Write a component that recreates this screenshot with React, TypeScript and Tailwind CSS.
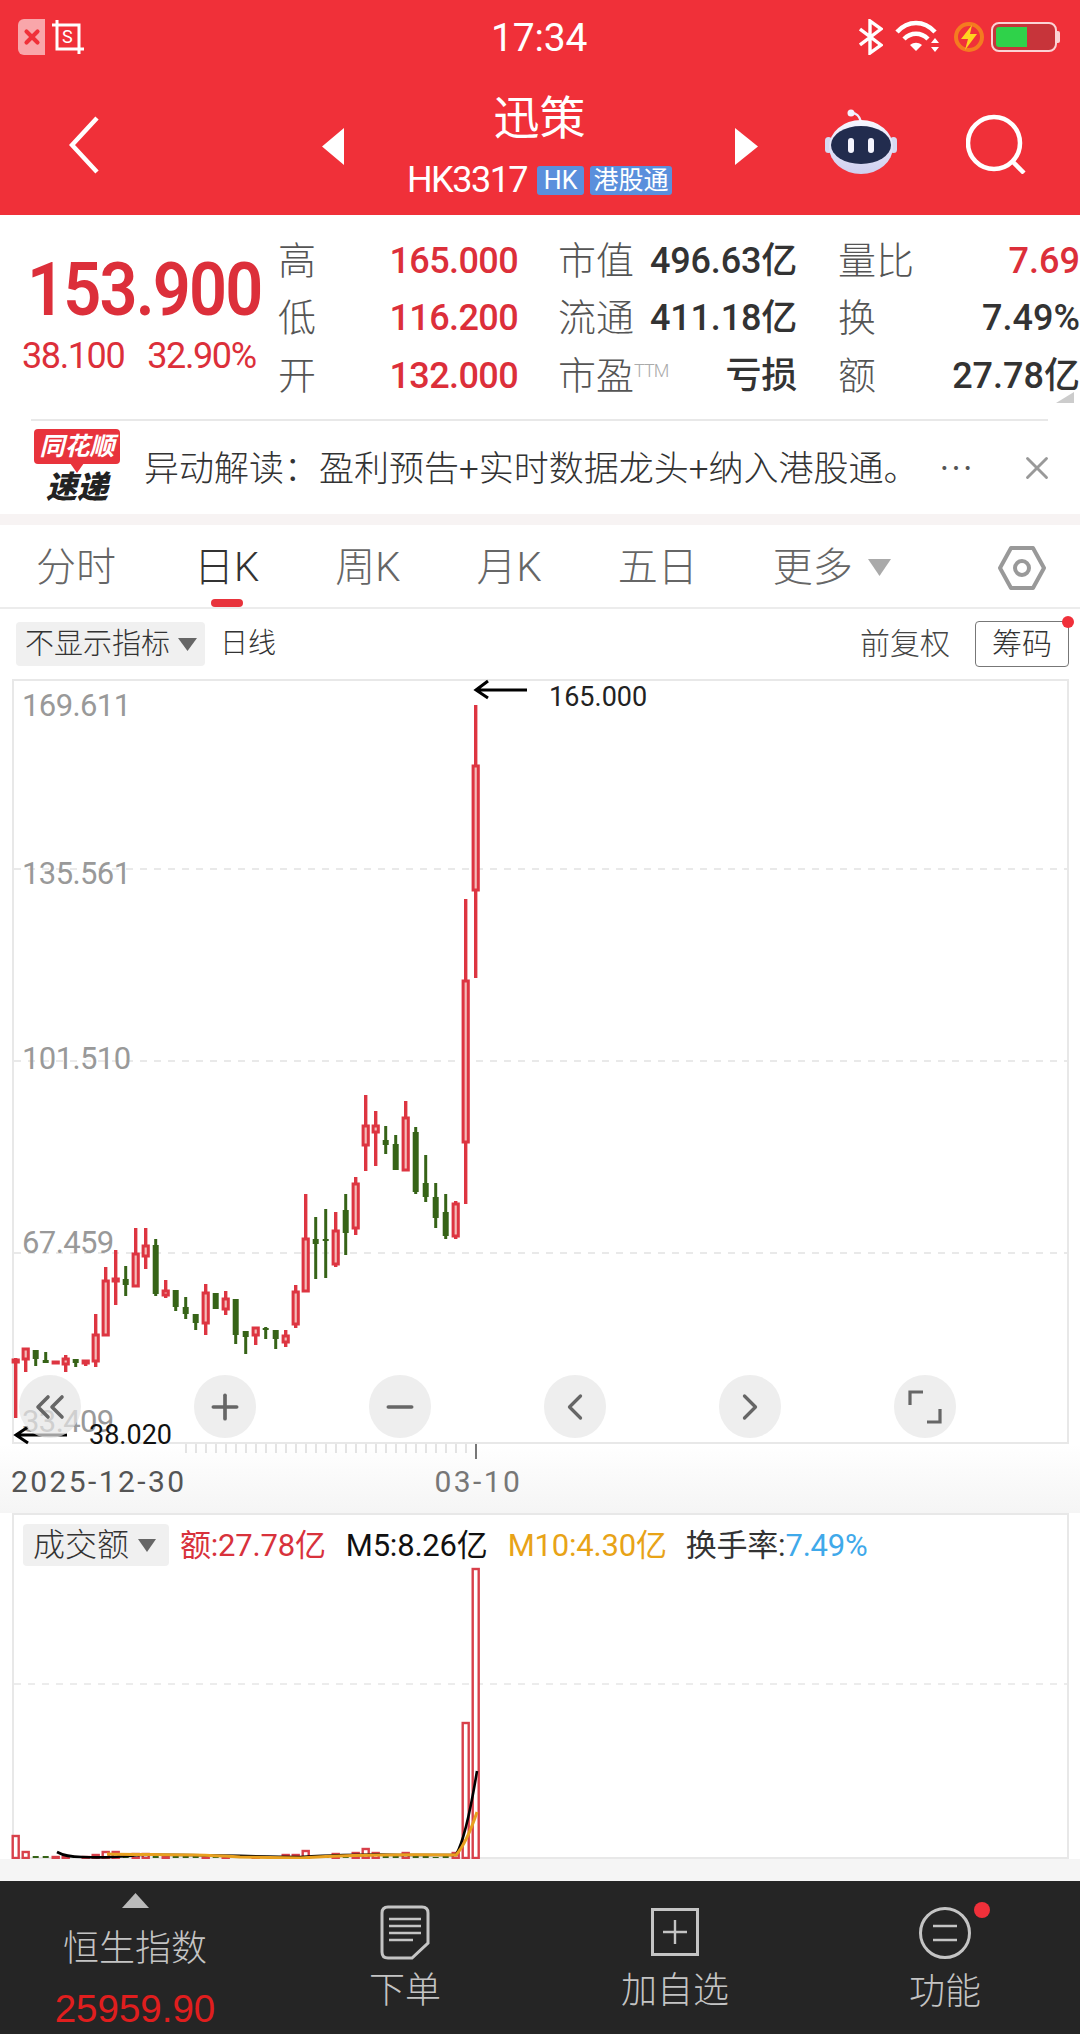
import { ChevronLeft, ChevronRight, ChevronsLeft, Minus, Plus, X } from 'lucide-react';

const RED = '#dd3541';
const GREEN = '#366317';

// up, wick top, body top, body bottom, wick bottom (page y coordinates)
const candles: [boolean, number, number, number, number][] = [
  [true, 1358, 1359, 1363, 1418],
  [true, 1348, 1348, 1360, 1372],
  [false, 1350, 1350, 1359, 1366],
  [false, 1352, 1360, 1363, 1363],
  [true, 1361, 1361, 1364, 1364],
  [true, 1355, 1358, 1365, 1372],
  [false, 1359, 1359, 1363, 1367],
  [true, 1360, 1360, 1364, 1366],
  [true, 1314, 1334, 1362, 1367],
  [true, 1267, 1280, 1336, 1336],
  [true, 1250, 1278, 1282, 1305],
  [false, 1266, 1279, 1285, 1296],
  [true, 1228, 1253, 1287, 1287],
  [true, 1228, 1245, 1257, 1269],
  [false, 1239, 1245, 1294, 1296],
  [true, 1280, 1290, 1296, 1298],
  [false, 1290, 1290, 1307, 1311],
  [false, 1297, 1307, 1314, 1319],
  [false, 1314, 1314, 1323, 1330],
  [true, 1284, 1292, 1324, 1335],
  [false, 1293, 1293, 1309, 1309],
  [true, 1291, 1298, 1310, 1315],
  [false, 1299, 1299, 1335, 1344],
  [false, 1331, 1331, 1337, 1354],
  [true, 1327, 1327, 1336, 1345],
  [false, 1327, 1328, 1330, 1339],
  [false, 1330, 1330, 1339, 1349],
  [true, 1330, 1335, 1343, 1347],
  [true, 1285, 1291, 1325, 1328],
  [true, 1194, 1238, 1292, 1292],
  [false, 1217, 1239, 1244, 1279],
  [false, 1209, 1239, 1241, 1278],
  [true, 1212, 1230, 1265, 1267],
  [false, 1194, 1210, 1233, 1255],
  [true, 1177, 1183, 1229, 1235],
  [true, 1095, 1125, 1146, 1171],
  [true, 1111, 1125, 1133, 1166],
  [false, 1126, 1140, 1145, 1154],
  [false, 1135, 1144, 1170, 1170],
  [true, 1101, 1117, 1171, 1171],
  [false, 1127, 1132, 1192, 1194],
  [false, 1155, 1183, 1197, 1202],
  [false, 1183, 1197, 1218, 1228],
  [false, 1194, 1212, 1236, 1239],
  [true, 1201, 1203, 1237, 1239],
  [true, 899, 980, 1143, 1204],
  [true, 705, 765, 891, 978],
];

const volumes = [22, 6, 2, 2, 1, 1, 2, 1, 3, 6, 6, 2, 4, 4, 3, 1, 2, 2, 2, 1, 1, 1, 2, 1, 1, 1, 1, 3, 3, 7, 2, 2, 4, 2, 5, 9, 5, 2, 2, 5, 3, 2, 1, 2, 5, 135, 289];

const cx = (i: number) => 15.7 + i * 10;

function KChart() {
  return (
    <svg viewBox="14 681 1053 761" className="block h-[761px] w-[1053px] overflow-visible">
      {[869, 1061, 1253].map((y) => (
        <line key={y} x1={14} x2={1067} y1={y} y2={y} stroke="#e2e2e2" strokeWidth={1.5} strokeDasharray="7 7" />
      ))}
      {[
        ['169.611', 716],
        ['135.561', 884],
        ['101.510', 1069],
        ['67.459', 1253],
        ['33.409', 1432],
      ].map(([t, y]) => (
        <text key={t} x={22} y={y} fill="#999999" fontSize={31} letterSpacing={-0.6} fontFamily="Roboto, sans-serif">
          {t}
        </text>
      ))}
      {candles.map(([up, high, top, bottom, low], i) => {
        const x = cx(i);
        const color = up ? RED : GREEN;
        const h = bottom - top;
        return (
          <g key={i}>
            <line x1={x} x2={x} y1={high} y2={low} stroke={color} strokeWidth={up ? 3.4 : 3} />
            {up ? (
              <rect x={x - 2.6} y={top + 1} width={5.2} height={Math.max(h - 2, 1)} fill={h > 5 ? '#f3bdb8' : RED} stroke={RED} strokeWidth={3} />
            ) : (
              <rect x={x - 3} y={top} width={6} height={h} fill={GREEN} />
            )}
          </g>
        );
      })}
      <g stroke="#000" strokeWidth={3} fill="none">
        <path d="M527 690H477M488 681L476 690L488 698" />
        <path d="M67 1435H17M28 1427L16 1435L28 1443" />
      </g>
      <text x={549} y={706} fontSize={27} fill="#222" fontFamily="Roboto, sans-serif">165.000</text>
      <text x={89} y={1444} fontSize={27} fill="#111" fontFamily="Roboto, sans-serif">38.020</text>
    </svg>
  );
}

function VolumeChart() {
  return (
    <svg viewBox="14 1570 1053 288" className="block h-[288px] w-[1053px] overflow-visible">
      <line x1={14} x2={1067} y1={1685} y2={1685} stroke="#e6e6e6" strokeWidth={1.5} strokeDasharray="7 7" />
      {volumes.map((v, i) => {
        const up = candles[i][0];
        const x = cx(i);
        return up ? (
          <rect key={i} x={x - 3} y={1859 - v} width={6} height={v} fill={v > 3 ? '#fff' : RED} stroke="#d8404a" strokeWidth={2.4} />
        ) : (
          <rect key={i} x={x - 3} y={1859 - v} width={6} height={v} fill={GREEN} />
        );
      })}
      <path d="M57 1853C64 1857 70 1858 82 1858C100 1859 120 1858 140 1856C170 1855 220 1857 300 1858C340 1856 370 1855 400 1856L456 1856C464 1842 470 1815 477 1772" fill="none" stroke="#000" strokeWidth={2.6} />
      <path d="M107 1855C150 1856 200 1855 240 1858L300 1859C330 1857 380 1855 456 1856C463 1848 470 1834 477 1813" fill="none" stroke="#e8a01f" strokeWidth={3} />
    </svg>
  );
}

function Robot() {
  return (
    <svg width="72" height="66" viewBox="0 0 72 66">
      <defs>
        <linearGradient id="robotHead" x1="0" y1="0" x2="0" y2="1">
          <stop offset="0" stopColor="#f7f7ff" />
          <stop offset="1" stopColor="#cfcfef" />
        </linearGradient>
      </defs>
      <path d="M36 14C34 6 30 5 26 5" fill="none" stroke="#eef" strokeWidth="2.5" />
      <circle cx="26" cy="5" r="3.5" fill="#f3f3ff" />
      <rect x="0" y="29" width="7" height="16" rx="3.5" fill="#d7d9f2" />
      <rect x="65" y="29" width="7" height="16" rx="3.5" fill="#d7d9f2" />
      <ellipse cx="36" cy="39" rx="32" ry="27" fill="url(#robotHead)" />
      <ellipse cx="36" cy="37" rx="30" ry="19" fill="#222c4e" />
      <rect x="23" y="30" width="6" height="15" rx="3" fill="#f5f5ff" />
      <rect x="43" y="30" width="6" height="15" rx="3" fill="#f5f5ff" />
    </svg>
  );
}

function Triangle({ dir, className }: { dir: 'l' | 'r' | 'd' | 'u' | 'c'; className: string }) {
  const pts = { l: '100,0 100,100 0,50', r: '0,0 0,100 100,50', d: '0,0 100,0 50,100', u: '0,100 100,100 50,0', c: '100,0 100,100 0,100' }[dir];
  return (
    <svg viewBox="0 0 100 100" preserveAspectRatio="none" className={className}>
      <polygon points={pts} fill="currentColor" />
    </svg>
  );
}

function QuoteRow({ label, value, label2, value2, label3, value3, ttm, red3 }: { label: string; value: string; label2: string; value2: string; label3: string; value3: string; ttm?: boolean; red3?: boolean }) {
  return (
    <div className="flex h-[57.5px] items-center">
      <span className="w-[38px] shrink-0 text-[38px] leading-none font-light text-[#555]">{label}</span>
      <span className="w-[202px] shrink-0 text-right text-[36px] leading-none font-medium tracking-[-0.6px] text-[#dc2f3a]">{value}</span>
      <span className="ml-[40px] flex w-[85px] shrink-0 items-start text-[38px] leading-none font-light whitespace-nowrap text-[#555]">
        {label2}
        {ttm && <span className="mt-[5px] text-[18px] font-light tracking-[-1px] text-[#aaa]">TTM</span>}
      </span>
      <span className="w-[154px] shrink-0 text-right text-[36px] leading-none font-medium tracking-[-0.2px] whitespace-nowrap text-[#333]">{value2}</span>
      <span className="ml-[41px] w-[76px] shrink-0 text-[38px] leading-none font-light text-[#555]">{label3}</span>
      <span className={`w-[166px] shrink-0 text-right text-[36px] leading-none font-medium whitespace-nowrap ${red3 ? 'text-[#dc2f3a]' : 'text-[#333]'}`}>{value3}</span>
    </div>
  );
}

export default function App() {
  return (
    <div className="flex h-[2034px] w-[1080px] flex-col overflow-hidden bg-white font-['Roboto','Noto_Sans_CJK_SC',sans-serif]">
      {/* red header */}
      <header className="h-[215px] shrink-0 bg-[#f03039] text-white">
        <div className="relative flex h-[74px] items-center pr-[20px] pl-[18px]">
          <div className="flex h-[36px] w-[27px] items-center justify-center rounded-l-[6px] bg-[#f9a6aa]">
            <X size={22} strokeWidth={4.5} color="#f03039" />
          </div>
          <svg width="32" height="34" viewBox="0 0 32 34" className="ml-[7px]" fill="none" stroke="#fff" strokeWidth="3">
            <path d="M5 0V29H32M0 5H27V34" />
            <rect x="9" y="8" width="14" height="17" fill="#f03039" stroke="none" />
            <text x="10" y="23" fontSize="18" fill="#fff" stroke="none" fontFamily="Roboto, sans-serif">S</text>
          </svg>
          <span className="absolute top-[15px] left-[491px] text-[39px] leading-[46px] font-normal tracking-[-0.2px]">17:34</span>
          <div className="ml-auto flex items-center">
            <svg width="24" height="36" viewBox="0 0 24 36" fill="none" stroke="#fff" strokeWidth="3.4">
              <path d="M1 10L22 26L11 34V2L22 10L1 26" />
            </svg>
            <svg width="46" height="34" viewBox="0 0 46 34" className="ml-[12px]" fill="none" stroke="#fff" strokeWidth="4.5">
              <path d="M2 12C13 0 29 0 40 12" />
              <path d="M9 19C16 12 26 12 33 19" />
              <path d="M15 25L21 31L27 25C23 22 19 22 15 25Z" fill="#fff" stroke="none" />
              <path d="M36 23L40 18L44 23ZM36 27L40 32L44 27Z" fill="#fff" stroke="none" />
            </svg>
            <svg width="32" height="30" viewBox="0 0 32 30" className="ml-[12px]">
              <circle cx="16" cy="15" r="13" fill="none" stroke="#f47b20" strokeWidth="4" />
              <path d="M19 3L8 17H15L12 28L24 12H17Z" fill="#ffd21f" />
            </svg>
            <div className="ml-[6px] flex h-[30px] w-[66px] items-center rounded-[8px] border-2 border-[#fbd3d5] bg-[#c7343a] pl-[3px]">
              <div className="h-[20px] w-[31px] rounded-l-[3px] bg-[#2fd24a]" />
            </div>
            <div className="h-[12px] w-[3px] rounded-r-[2px] bg-[#fbd3d5]" />
          </div>
        </div>
        <div className="flex h-[141px] items-start">
          <div className="mt-[42px] ml-[69px] w-[253px]">
            <svg width="30" height="58" viewBox="0 0 30 58" fill="none" stroke="#fff" strokeWidth="4.5">
              <path d="M28 2L3 29L28 56" />
            </svg>
          </div>
          <Triangle dir="l" className="mt-[54px] h-[37px] w-[22px] text-white" />
          <div className="flex w-[391px] flex-col items-center">
            <span className="mt-[17px] text-[46px] leading-[54px] font-normal">迅策</span>
            <div className="mt-[20px] flex h-[30px] items-center">
              <span className="text-[36px] leading-none tracking-[-1.5px]">HK3317</span>
              <span className="ml-[10px] flex h-[29px] w-[47px] items-center justify-center rounded-[3px] bg-[#5a8fdc] text-[25px] leading-none">HK</span>
              <span className="ml-[6px] flex h-[29px] w-[82px] items-center justify-center rounded-[3px] bg-[#5a8fdc] text-[25px] leading-none">港股通</span>
            </div>
          </div>
          <Triangle dir="r" className="mt-[54px] h-[37px] w-[23px] text-white" />
          <div className="mt-[34px] ml-[67px]">
            <Robot />
          </div>
          <svg width="60" height="60" viewBox="0 0 60 60" className="mt-[40px] ml-[69px]" fill="none" stroke="#fff" strokeWidth="4.5">
            <circle cx="28" cy="29" r="26" />
            <path d="M46 47L58 59" />
          </svg>
        </div>
      </header>

      {/* quote block */}
      <section className="relative flex h-[204px] shrink-0 overflow-hidden pt-[17px]">
        <div className="w-[278px] shrink-0 pl-[22px]">
          <div className="mt-[28px] ml-[5px] origin-left scale-x-[0.9] text-[74px] leading-[60px] font-semibold tracking-[-2px] whitespace-nowrap text-[#dc2f3a]">153.900</div>
          <div className="mt-[16px] flex text-[36px] leading-[40px] font-normal tracking-[-1.4px] text-[#dc2f3a]">
            <span>38.100</span>
            <span className="ml-[23px]">32.90%</span>
          </div>
        </div>
        <div className="flex-1">
          <QuoteRow label="高" value="165.000" label2="市值" value2="496.63亿" label3="量比" value3="7.69" red3 />
          <QuoteRow label="低" value="116.200" label2="流通" value2="411.18亿" label3="换" value3="7.49%" />
          <QuoteRow label="开" value="132.000" label2="市盈" value2="亏损" label3="额" value3="27.78亿" ttm />
        </div>
        <Triangle dir="c" className="absolute right-[6px] bottom-[16px] h-[11px] w-[18px] text-[#cccccc]" />
      </section>

      {/* news strip */}
      <div className="mx-[31px] h-[1.5px] w-[1017px] shrink-0 bg-[#e8e8e8]" />
      <section className="flex h-[93px] shrink-0 items-center">
        <div className="ml-[34px] flex w-[86px] flex-col items-center">
          <div className="relative flex h-[35px] w-[86px] items-center justify-center rounded-[4px] bg-[#e8333c] text-[25px] leading-none font-bold text-white italic">
            同花顺
            <Triangle dir="d" className="absolute -bottom-[9px] left-[36px] h-[10px] w-[14px] text-[#e8333c]" />
          </div>
          <span className="mt-[7px] text-[31px] leading-[34px] font-black text-[#222] italic">速递</span>
        </div>
        <p className="mt-[4px] ml-[24px] w-[874px] shrink-0 text-[35px] leading-none font-light whitespace-nowrap text-[#333]">
          异动解读：盈利预告+实时数据龙头+纳入港股通。
          <span className="ml-[20px] text-[#555]">⋯</span>
        </p>
        <X size={38} strokeWidth={1.8} color="#999" className="mt-[2px]" />
      </section>
      <div className="h-[11px] shrink-0 bg-[#f7f3f3]" />

      {/* period tabs */}
      <nav className="relative flex h-[84px] shrink-0 items-center border-b-2 border-[#ececec] pt-[4px] text-[40px] leading-none font-light text-[#666]">
        <span className="ml-[36px]">分时</span>
        <span className="ml-[78px] text-[#333]">日K</span>
        <span className="ml-[76px]">周K</span>
        <span className="ml-[76px]">月K</span>
        <span className="ml-[76px]">五日</span>
        <span className="ml-[75px]">更多</span>
        <Triangle dir="d" className="ml-[15px] h-[17px] w-[23px] text-[#aaaaaa]" />
        <svg width="48" height="46" viewBox="0 0 48 46" className="ml-[107px]" fill="none" stroke="#999" strokeWidth="4" strokeLinejoin="round">
          <path d="M13 3H35L46 23L35 43H13L2 23Z" />
          <circle cx="24" cy="23" r="7" />
        </svg>
        <span className="absolute bottom-0 left-[211px] h-[8px] w-[32px] rounded-full bg-[#e8333c]" />
      </nav>

      {/* chart toolbar */}
      <div className="flex h-[71.5px] shrink-0 items-center pl-[16px]">
        <div className="flex h-[44px] w-[189px] items-center rounded-[4px] bg-[#f0f0f0] pl-[9px] text-[29px] leading-none font-light text-[#333]">
          不显示指标
          <Triangle dir="d" className="ml-[8px] h-[13px] w-[19px] text-[#666666]" />
        </div>
        <span className="ml-[15px] text-[28px] leading-none font-light text-[#333]">日线</span>
        <span className="ml-auto text-[30px] leading-none font-light text-[#444]">前复权</span>
        <div className="relative mr-[11px] ml-[25px] flex h-[46px] w-[94px] items-center justify-center rounded-[4px] border border-[#777] text-[30px] leading-none font-light text-[#333]">
          筹码
          <span className="absolute -top-[6px] -right-[6px] h-[12px] w-[12px] rounded-full bg-[#f0303a]" />
        </div>
      </div>

      {/* k-line chart */}
      <div className="relative mx-[12px] mt-[-1px] h-[765px] w-[1057px] shrink-0 border-2 border-[#e8e8e8]">
        <KChart />
        <div className="absolute top-[694px] left-[5px] flex gap-[113px]">
          <button className="flex h-[63px] w-[62px] items-center justify-center rounded-full bg-[#e6e6e6]/70 text-[#666]"><ChevronsLeft size={48} strokeWidth={1.8} /></button>
          <button className="flex h-[63px] w-[62px] items-center justify-center rounded-full bg-[#eeeeee] text-[#666]"><Plus size={40} strokeWidth={2.2} /></button>
          <button className="flex h-[63px] w-[62px] items-center justify-center rounded-full bg-[#eeeeee] text-[#666]"><Minus size={40} strokeWidth={2.2} /></button>
          <button className="flex h-[63px] w-[62px] items-center justify-center rounded-full bg-[#eeeeee] text-[#666]"><ChevronLeft size={44} strokeWidth={1.8} /></button>
          <button className="flex h-[63px] w-[62px] items-center justify-center rounded-full bg-[#eeeeee] text-[#666]"><ChevronRight size={44} strokeWidth={1.8} /></button>
          <button className="flex h-[63px] w-[62px] items-center justify-center rounded-full bg-[#eeeeee] text-[#666]">
            <svg width="34" height="34" viewBox="0 0 34 34" fill="none" stroke="#666" strokeWidth="3.2">
              <path d="M15 2H2V15M19 32H32V19" />
            </svg>
          </button>
        </div>
      </div>

      {/* date axis */}
      <div className="flex h-[69px] shrink-0 flex-col bg-gradient-to-b from-white to-[#f5f5f5]">
        <svg viewBox="0 0 1080 16" className="block h-[16px] w-[1080px] shrink-0">
          {Array.from({ length: 30 }, (_, i) => (
            <line key={i} x1={186 + i * 10} x2={186 + i * 10} y1={0} y2={9} stroke="#c9c9c9" strokeWidth={1} />
          ))}
          <line x1={476} x2={476} y1={0} y2={15} stroke="#777" strokeWidth={2} />
        </svg>
        <div className="mt-[7px] flex pl-[11px] text-[30px] leading-[30px] font-normal tracking-[2.4px] text-[#555]">
          <span>2025-12-30</span>
          <span className="ml-[248px] text-[#777]">03-10</span>
        </div>
      </div>

      {/* volume panel */}
      <div className="mx-[12px] h-[346px] w-[1057px] shrink-0 border-2 border-[#e8e8e8] bg-white">
        <div className="flex h-[54px] items-start pt-[9px] pl-[9px] text-[31px] leading-none font-light">
          <div className="flex h-[42px] w-[146px] items-center rounded-[4px] bg-[#f0f0f0] pl-[10px] text-[32px] text-[#333]">
            成交额
            <Triangle dir="d" className="ml-[9px] h-[13px] w-[18px] text-[#666666]" />
          </div>
          <div className="flex h-[42px] items-center font-normal tracking-[-0.2px] whitespace-nowrap">
            <span className="ml-[11px] text-[#d8323c]">额:27.78亿</span>
            <span className="ml-[20px] text-[#111]">M5:8.26亿</span>
            <span className="ml-[20px] text-[#e8a317]">M10:4.30亿</span>
            <span className="ml-[19px] text-[#333]">换手率:</span>
            <span className="text-[#3fa9ea]">7.49%</span>
          </div>
        </div>
        <VolumeChart />
      </div>
      <div className="h-[22px] shrink-0 bg-[#f5f5f5]" />

      {/* bottom bar */}
      <footer className="flex flex-1 bg-[#252525] text-[#c4c4c4]">
        <div className="flex w-[270px] flex-col items-center">
          <Triangle dir="u" className="mt-[12px] h-[15px] w-[27px] text-[#bbbbbb]" />
          <span className="mt-[19px] text-[36px] leading-[44px] font-light">恒生指数</span>
          <span className="mt-[16px] font-['Liberation_Sans',sans-serif] text-[38.5px] leading-[44px] text-[#e01e1e]">25959.90</span>
        </div>
        <div className="flex w-[270px] flex-col items-center">
          <svg width="50" height="55" viewBox="0 0 50 55" className="mt-[24px]" fill="none" stroke="#c4c4c4" strokeWidth="3">
            <path d="M8 2H42C46 2 48 4 48 8V38L32 53H8C4 53 2 51 2 47V8C2 4 4 2 8 2Z" />
            <path d="M9 14H41M9 21H41M9 28H41M9 35H33" strokeWidth="2.6" />
          </svg>
          <span className="mt-[10px] text-[36px] leading-[42px] font-light">下单</span>
        </div>
        <div className="flex w-[270px] flex-col items-center">
          <svg width="48" height="48" viewBox="0 0 48 48" className="mt-[27px]" fill="none" stroke="#c4c4c4" strokeWidth="3">
            <rect x="1.5" y="1.5" width="45" height="45" />
            <path d="M24 12V36M12 24H36" strokeWidth="2.4" />
          </svg>
          <span className="mt-[14px] text-[36px] leading-[42px] font-light">加自选</span>
        </div>
        <div className="relative flex w-[270px] flex-col items-center">
          <svg width="52" height="52" viewBox="0 0 52 52" className="mt-[26px]" fill="none" stroke="#c4c4c4" strokeWidth="3">
            <circle cx="26" cy="26" r="24.5" />
            <path d="M14 19H38M14 33H38" strokeWidth="2.6" />
          </svg>
          <span className="mt-[12px] text-[36px] leading-[42px] font-light">功能</span>
          <span className="absolute top-[21px] left-[164px] h-[16px] w-[16px] rounded-full bg-[#f0303a]" />
        </div>
      </footer>
    </div>
  );
}
